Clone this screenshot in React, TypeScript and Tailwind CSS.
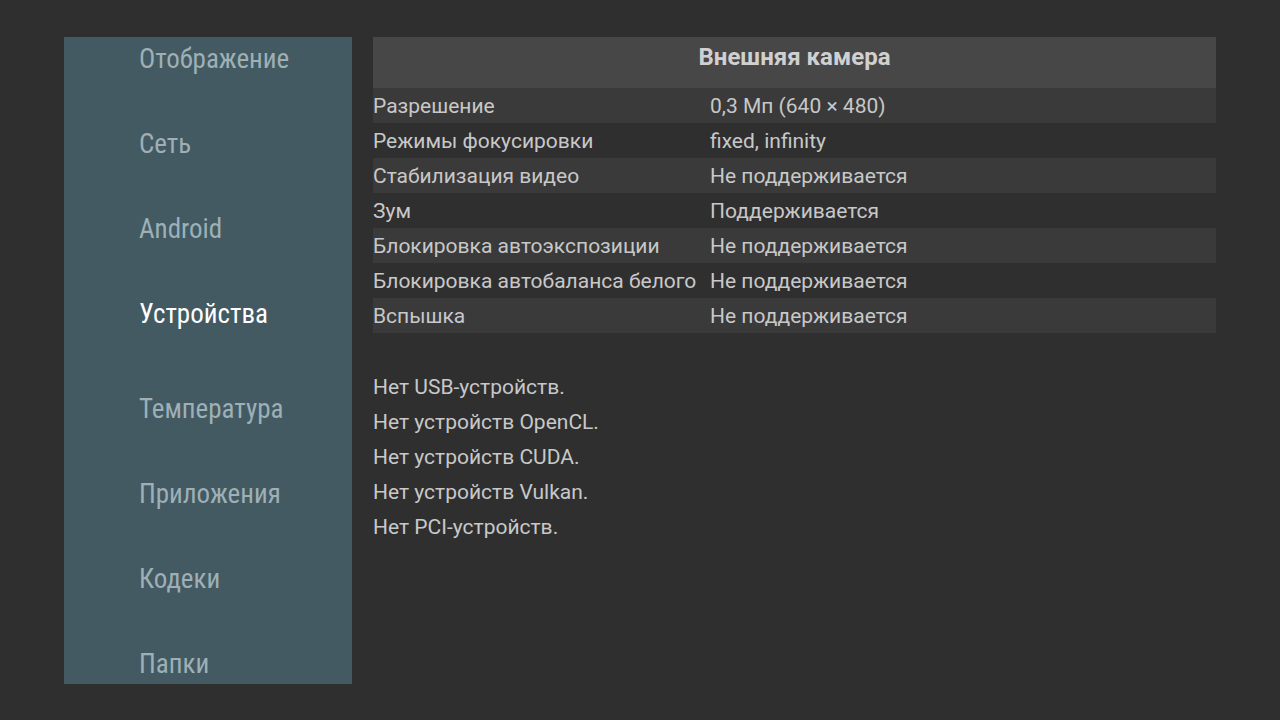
const sections = [
  "Отображение",
  "Сеть",
  "Android",
  "Устройства",
  "Температура",
  "Приложения",
  "Кодеки",
  "Папки",
];

const camera = [
  ["Разрешение", "0,3 Мп (640 × 480)"],
  ["Режимы фокусировки", "fixed, infinity"],
  ["Стабилизация видео", "Не поддерживается"],
  ["Зум", "Поддерживается"],
  ["Блокировка автоэкспозиции", "Не поддерживается"],
  ["Блокировка автобаланса белого", "Не поддерживается"],
  ["Вспышка", "Не поддерживается"],
];

const missing = [
  "Нет USB-устройств.",
  "Нет устройств OpenCL.",
  "Нет устройств CUDA.",
  "Нет устройств Vulkan.",
  "Нет PCI-устройств.",
];

const active = "Устройства";

export default function App() {
  return (
    <div className="flex h-[720px] w-[1280px] gap-[21px] overflow-hidden bg-[#2f2f2f] px-[64px] pt-[37px] pb-[36px] font-['Roboto',sans-serif]">
      <nav className="flex w-[288px] shrink-0 flex-col overflow-hidden bg-[#435a63] pl-[75px] pt-[7px]">
        {sections.map((s, i) => (
          <div
            key={s}
            className={
              "h-[30px] shrink-0 text-[27px] leading-[30px] font-['Roboto_Condensed','Liberation_Sans_Narrow','DejaVu_Sans_Condensed',sans-serif] " +
              (i === 0 ? "" : sections[i - 1] === active ? "mt-[65px] " : "mt-[55px] ") +
              (s === active ? "text-white" : "text-[#9eb0b6]")
            }
          >
            {s}
          </div>
        ))}
      </nav>

      <main className="flex flex-1 flex-col text-[21px] text-[#c8c8c8]">
        <div className="flex h-[51px] items-center justify-center bg-[#474747] pb-[12px] text-[24px] font-bold text-[#d0d0d0]">
          Внешняя камера
        </div>
        {camera.map(([k, v], i) => (
          <div
            key={k}
            className={
              "flex h-[35px] items-center pt-[2px] " + (i % 2 === 0 ? "bg-[#3a3a3a]" : "")
            }
          >
            <span className="w-[337px] shrink-0">{k}</span>
            <span>{v}</span>
          </div>
        ))}
        <div className="mt-[37px] flex flex-col">
          {missing.map((m) => (
            <div key={m} className="flex h-[35px] items-center">
              {m}
            </div>
          ))}
        </div>
      </main>
    </div>
  );
}
